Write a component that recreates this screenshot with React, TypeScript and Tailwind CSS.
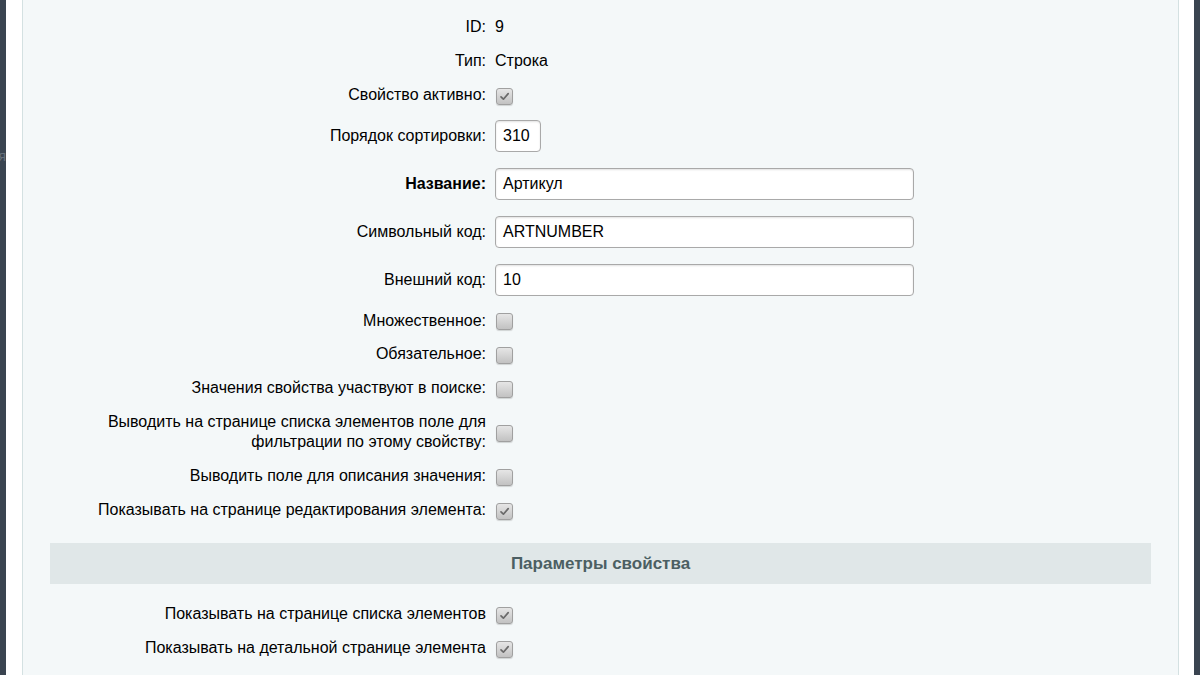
import React from 'react';

// Bitrix-style "edit property" form: labels right-aligned, controls on the right.

const FONT = { fontFamily: '"Liberation Sans", Arial, sans-serif' };

function Check({ checked = false }: { checked?: boolean }) {
  return (
    <span className="mt-[2px] ml-[1px] inline-flex h-[17px] w-[17px] items-center justify-center rounded-[3px] border border-[#a0a0a0] bg-gradient-to-b from-[#e6e6e6] to-[#c2c2c2] shadow-[0_1px_1px_rgba(0,0,0,0.15)]">
      {checked && (
        <svg width="13" height="13" viewBox="0 0 13 13" fill="none">
          <path d="M3 6.8 L5.4 9.2 L10.2 3.6" stroke="#6a6a6a" strokeWidth="1.7" strokeLinecap="round" strokeLinejoin="round" />
        </svg>
      )}
    </span>
  );
}

function Field({ value, w }: { value: string; w: string }) {
  return (
    <div className={`flex h-[32px] items-center rounded-[4px] border border-[#a9a9a9] bg-white px-[7px] text-[16px] text-black shadow-[inset_0_1px_2px_rgba(0,0,0,0.12)] ${w}`}>
      {value}
    </div>
  );
}

function Row({ label, h = 'h-[34px]', bold = false, children }: { label: React.ReactNode; h?: string; bold?: boolean; children?: React.ReactNode }) {
  return (
    <div className={`grid grid-cols-[472px_1fr] items-center ${h}`}>
      <div className={`pr-[9px] text-right text-[16px] leading-[20px] text-black ${bold ? 'font-bold' : ''}`}>{label}</div>
      <div className="flex items-center text-[16px] text-black">{children}</div>
    </div>
  );
}

export default function App() {
  return (
    <div className="flex h-[675px] w-[1200px] overflow-hidden bg-white" style={FONT}>
      <div className="flex w-[6px] flex-none items-start justify-end overflow-hidden bg-[#3a4450] pt-[146px]">
        <span className="whitespace-nowrap text-[14px] text-[#66707a]">ия</span>
      </div>
      <div className="w-[16px] flex-none" />
      <div className="flex-1 border-x border-[#d4e1e2] bg-[#f4f8f9] pt-[10px]">
        <Row label="ID:">9</Row>
        <Row label="Тип:">Строка</Row>
        <Row label="Свойство активно:"><Check checked /></Row>
        <Row label="Порядок сортировки:" h="h-[48px]"><Field value="310" w="w-[46px]" /></Row>
        <Row label="Название:" bold h="h-[48px]"><Field value="Артикул" w="w-[419px]" /></Row>
        <Row label="Символьный код:" h="h-[48px]"><Field value="ARTNUMBER" w="w-[419px]" /></Row>
        <Row label="Внешний код:" h="h-[48px]"><Field value="10" w="w-[419px]" /></Row>
        <Row label="Множественное:" h="h-[33px]"><Check /></Row>
        <Row label="Обязательное:"><Check /></Row>
        <Row label="Значения свойства участвуют в поиске:"><Check /></Row>
        <Row label={<>Выводить на странице списка элементов поле для<br />фильтрации по этому свойству:</>} h="h-[54px]"><Check /></Row>
        <Row label="Выводить поле для описания значения:"><Check /></Row>
        <Row label="Показывать на странице редактирования элемента:"><Check checked /></Row>

        <div className="mx-[27px] mt-[16px] flex h-[41px] items-center justify-center bg-[#e0e7e8] text-[17px] font-bold text-[#4c5f63]">
          Параметры свойства
        </div>

        <div className="pt-[13px]">
          <Row label="Показывать на странице списка элементов"><Check checked /></Row>
          <Row label="Показывать на детальной странице элемента"><Check checked /></Row>
        </div>
      </div>
      <div className="w-[15px] flex-none" />
      <div className="w-[6px] flex-none bg-[#3a4450]" />
    </div>
  );
}
